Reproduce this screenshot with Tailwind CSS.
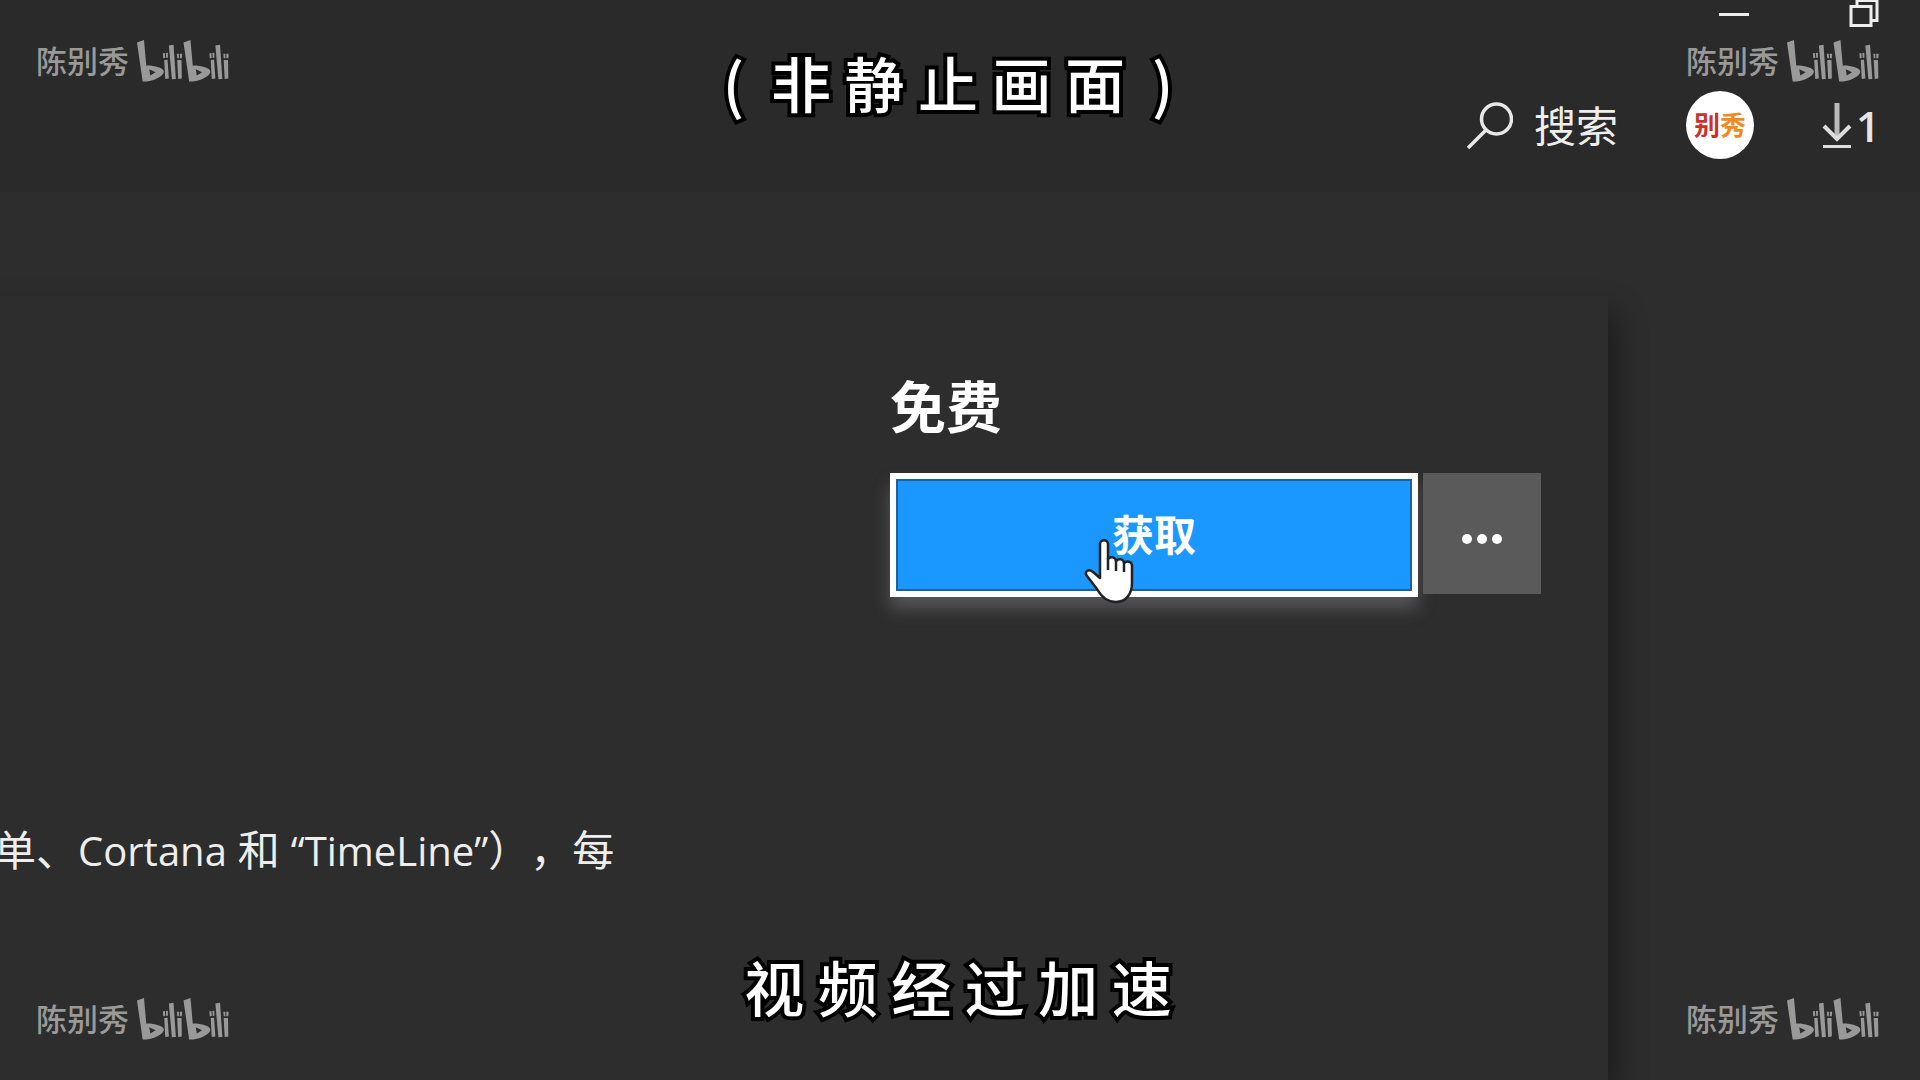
<!DOCTYPE html>
<html lang="zh-CN">
<head>
    <meta charset="UTF-8">
    <meta name="viewport" content="width=device-width, initial-scale=1.0">
    <title>Microsoft Store</title>
    <script src="https://cdn.jsdelivr.net/npm/@tailwindcss/browser@4"></script>
</head>
<body class="relative flex h-screen flex-col overflow-hidden bg-[#2d2d2d] font-['Open_Sans','Noto_Sans_CJK_SC',sans-serif] text-white">

    <!-- Logo shared by the watermarks -->
    <svg class="hidden">
        <symbol id="bilibili" viewBox="0 0 280 126">
            <g id="bili">
                <path fill-rule="evenodd" d="M0 7 L21 0 L28 77 C50 76 80 84 81 95 C79 108 52 125 17 125 Z M37 88 L40 107 L56 97 Z" />
                <path d="M78 40l6-1 1 15-6 1zM87 39l6-1 0 15-5 1zM82 60l10-1 4 57-11 1z" />
                <path d="M96 16l14-2 7 103-12 1z" />
                <path d="M120 41l6 0 0 14-5 0zM129 41l7 0-1 14-6 0zM121 60l13 0 1 56-11 1z" />
            </g>
            <use href="#bili" x="140" />
        </symbol>
    </svg>

    <!-- Header -->
    <header class="h-48 shrink-0 bg-[#2a2a2a]">
        <div class="flex h-8 justify-end gap-[100px] pr-[41px]">
            <button aria-label="最小化" class="h-7 w-[30px]">
                <svg viewBox="0 0 30 28" class="h-7 w-[30px]"><path d="M0 14.5h30" stroke="#eee" stroke-width="3" /></svg>
            </button>
            <button aria-label="还原" class="h-7 w-[30px]">
                <svg viewBox="0 0 30 28" class="h-7 w-[30px]" fill="none" stroke="#eee" stroke-width="3"><path d="M2 6.500h20v19H2zM8 6V0.500h20v20h-5" /></svg>
            </button>
        </div>
        <div class="flex items-start justify-end pt-[59px] pr-10">
            <button class="flex h-[70px] items-center gap-[21px] text-[42px] leading-none text-[#eee]">
                <svg viewBox="0 0 46 48" class="h-12 w-[46px]" fill="none" stroke="#e8e8e8" stroke-width="3.500"><circle cx="29.500" cy="17" r="15" /><path d="M19 28L1 46" /></svg>
                搜索
            </button>
            <button class="ml-[68px] flex size-[68px] items-center justify-center rounded-full bg-white text-[26px] leading-none font-bold">
                <span class="text-[#c8322b]">别</span><span class="text-[#f58a1c]">秀</span>
            </button>
            <button class="ml-[68px] flex h-[70px] items-center gap-1 text-[42px] leading-none font-semibold text-[#e6e6e6]">
                <svg viewBox="0 0 30 46" class="h-[46px] w-[30px]" fill="none" stroke="#ddd"><path d="M15 0v36" stroke-width="5" stroke="#bbb" /><path d="M2 23l13 13 13-13" stroke-width="4" /><path d="M1 43.500h28" stroke-width="3" /></svg>
                1
            </button>
        </div>
    </header>

    <!-- Product card -->
    <main class="mt-[104px] mr-[312px] -ml-12 flex-1 bg-[#2d2d2d] pl-12 shadow-[8px_16px_28px_rgba(0,0,0,0.4)]">
        <section class="flex justify-end pt-[76px] pr-[67px]">
            <div>
                <h2 class="text-[56px] leading-[68px] font-bold">免费</h2>
                <div class="mt-[33px] flex items-start gap-[5px]">
                    <button class="h-[124px] w-[528px] border-6 border-white bg-[#1a98ff] text-[42px] leading-none font-bold shadow-[0_12px_16px_rgba(160,160,170,0.35)] outline-2 -outline-offset-8 outline-[#1a62a0]">获取</button>
                    <button aria-label="更多" class="flex h-[121px] w-[118px] items-center justify-center gap-[5px] bg-[#5a5a5a] pt-[11px]">
                        <span class="size-[10px] rounded-full bg-white"></span>
                        <span class="size-[10px] rounded-full bg-white"></span>
                        <span class="size-[10px] rounded-full bg-white"></span>
                    </button>
                </div>
            </div>
        </section>
        <p class="mt-[221px] -ml-1.5 text-[42px] leading-[64px] whitespace-nowrap text-[#eee] [text-spacing-trim:space-all]">单、<span class="text-[40px]">Cortana</span> 和 <span class="text-[40px]">“TimeLine”</span>），每</p>
    </main>

    <!-- Mouse pointer -->
    <svg viewBox="0 0 50 66" class="absolute top-[538px] left-[1084px] h-[66px] w-[50px]" fill="#fff" stroke="#222" stroke-width="2.500" stroke-linejoin="round">
        <path d="M16 6C16 1 24 1 24 6V21C26 18 32 19 32 23C35 20 40 21 40 25C44 22 48 24 48 28V45C48 56 42 64 32 64C22 64 17 58 13 51L3 38C0 34 4 30 9 34L16 40Z" />
        <path d="M24 20v12M32 22v11M40 24v10" fill="none" />
    </svg>

    <!-- Captions -->
    <p class="absolute inset-x-0 top-9 pr-6 text-center font-['Noto_Sans_CJK_SC',sans-serif] text-[60px] leading-[92px] font-medium whitespace-pre [-webkit-text-stroke:8px_black] [paint-order:stroke_fill]">(  非 静 止 画 面  )</p>
    <p class="absolute inset-x-0 bottom-12 pr-1 text-center font-['Noto_Sans_CJK_SC',sans-serif] text-[60px] leading-[92px] font-medium whitespace-pre [-webkit-text-stroke:8px_black] [paint-order:stroke_fill]">视 频 经 过 加 速</p>

    <!-- Watermarks -->
    <div class="absolute top-10 left-9 flex items-center gap-2 text-[31px] leading-[42px] font-medium text-[#999]">
        陈别秀<svg class="h-[42px] w-[93px] fill-[#999]"><use href="#bilibili" /></svg>
    </div>
    <div class="absolute top-10 right-10 flex items-center gap-2 text-[31px] leading-[42px] font-medium text-[#999]">
        陈别秀<svg class="h-[42px] w-[93px] fill-[#999]"><use href="#bilibili" /></svg>
    </div>
    <div class="absolute bottom-10 left-9 flex items-center gap-2 text-[31px] leading-[42px] font-medium text-[#999]">
        陈别秀<svg class="h-[42px] w-[93px] fill-[#999]"><use href="#bilibili" /></svg>
    </div>
    <div class="absolute right-10 bottom-10 flex items-center gap-2 text-[31px] leading-[42px] font-medium text-[#999]">
        陈别秀<svg class="h-[42px] w-[93px] fill-[#999]"><use href="#bilibili" /></svg>
    </div>

</body>
</html>
